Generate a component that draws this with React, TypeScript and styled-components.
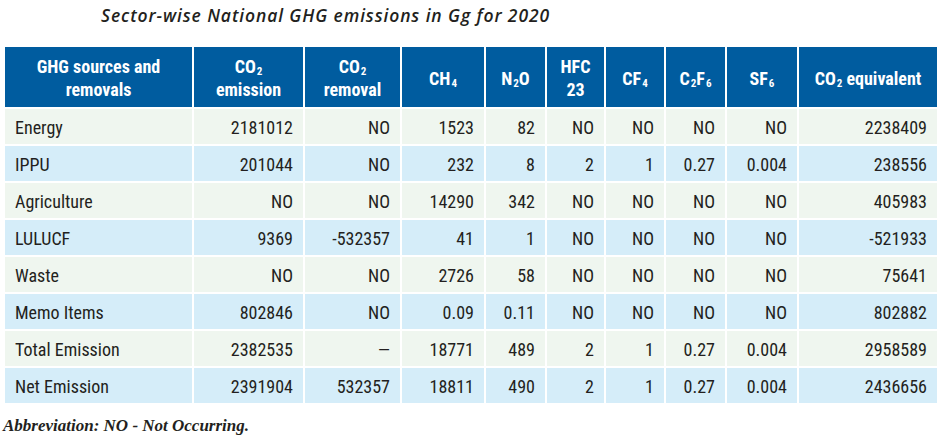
import React from "react";
import styled, { createGlobalStyle } from "styled-components";

const Global = createGlobalStyle`
  html, body { margin: 0; padding: 0; background: #ffffff; }
  body { width: 941px; height: 446px; overflow: hidden; }
`;

const Page = styled.div`
  display: flex;
  flex-direction: column;
  width: 941px;
  color: #231f20;
`;

const Title = styled.h1`
  margin: 0;
  height: 47px;
  box-sizing: border-box;
  padding: 5px 0 0 101px;
  font-family: "Open Sans", "Liberation Sans", sans-serif;
  font-style: italic;
  font-weight: 600;
  font-size: 17.5px;
  letter-spacing: 0.9px;
  line-height: 20px;
  color: #231f20;
`;

const Grid = styled.div`
  display: grid;
  margin-left: 5px;
  grid-template-columns: 187px 109px 95px 82px 59px 57px 58px 59px 70px 138px;
  grid-template-rows: 60px repeat(8, 35px);
  gap: 2px;
  font-family: "Liberation Sans Narrow", "Roboto Condensed", "DejaVu Sans Condensed", "Liberation Sans", sans-serif;
  font-stretch: condensed;
`;

const HeadCell = styled.div`
  background: #005c9f;
  color: #ffffff;
  font-weight: 700;
  font-size: 18px;
  line-height: 23px;
  display: flex;
  align-items: center;
  justify-content: center;
  text-align: center;
  padding: 2px 4px 0;
`;

const HeadText = styled.span`
  display: block;

  sub {
    font-size: 11px;
    vertical-align: -2px;
    line-height: 0;
    margin-left: 1px;
  }
`;

const Cell = styled.div<{ $tone: "green" | "blue"; $first?: boolean }>`
  background: ${(p) => (p.$tone === "green" ? "#eff6ef" : "#d5edf9")};
  display: flex;
  align-items: center;
  justify-content: ${(p) => (p.$first ? "flex-start" : "flex-end")};
  padding: 2px 10px 0;
  font-size: 18px;
  line-height: 20px;
  white-space: nowrap;
  color: #231f20;
`;

const Note = styled.p`
  margin: 13px 0 0 3px;
  font-family: "Liberation Serif", serif;
  font-style: italic;
  font-weight: 700;
  font-size: 17px;
  line-height: 20px;
  color: #231f20;
`;

const headers: React.ReactNode[] = [
  <>GHG sources and<br />removals</>,
  <>CO<sub>2</sub><br />emission</>,
  <>CO<sub>2</sub><br />removal</>,
  <>CH<sub>4</sub></>,
  <>N<sub>2</sub>O</>,
  <>HFC<br />23</>,
  <>CF<sub>4</sub></>,
  <>C<sub>2</sub>F<sub>6</sub></>,
  <>SF<sub>6</sub></>,
  <>CO<sub>2</sub> equivalent</>,
];

const rows: string[][] = [
  ["Energy", "2181012", "NO", "1523", "82", "NO", "NO", "NO", "NO", "2238409"],
  ["IPPU", "201044", "NO", "232", "8", "2", "1", "0.27", "0.004", "238556"],
  ["Agriculture", "NO", "NO", "14290", "342", "NO", "NO", "NO", "NO", "405983"],
  ["LULUCF", "9369", "-532357", "41", "1", "NO", "NO", "NO", "NO", "-521933"],
  ["Waste", "NO", "NO", "2726", "58", "NO", "NO", "NO", "NO", "75641"],
  ["Memo Items", "802846", "NO", "0.09", "0.11", "NO", "NO", "NO", "NO", "802882"],
  ["Total Emission", "2382535", "—", "18771", "489", "2", "1", "0.27", "0.004", "2958589"],
  ["Net Emission", "2391904", "532357", "18811", "490", "2", "1", "0.27", "0.004", "2436656"],
];

export default function App() {
  return (
    <>
      <Global />
      <Page>
        <Title>Sector-wise National GHG emissions in Gg for 2020</Title>
        <Grid>
          {headers.map((h, i) => (
            <HeadCell key={`h${i}`}>
              <HeadText>{h}</HeadText>
            </HeadCell>
          ))}
          {rows.map((r, ri) =>
            r.map((v, ci) => (
              <Cell key={`${ri}-${ci}`} $tone={ri % 2 === 0 ? "green" : "blue"} $first={ci === 0}>
                {v}
              </Cell>
            ))
          )}
        </Grid>
        <Note>Abbreviation: NO - Not Occurring.</Note>
      </Page>
    </>
  );
}
